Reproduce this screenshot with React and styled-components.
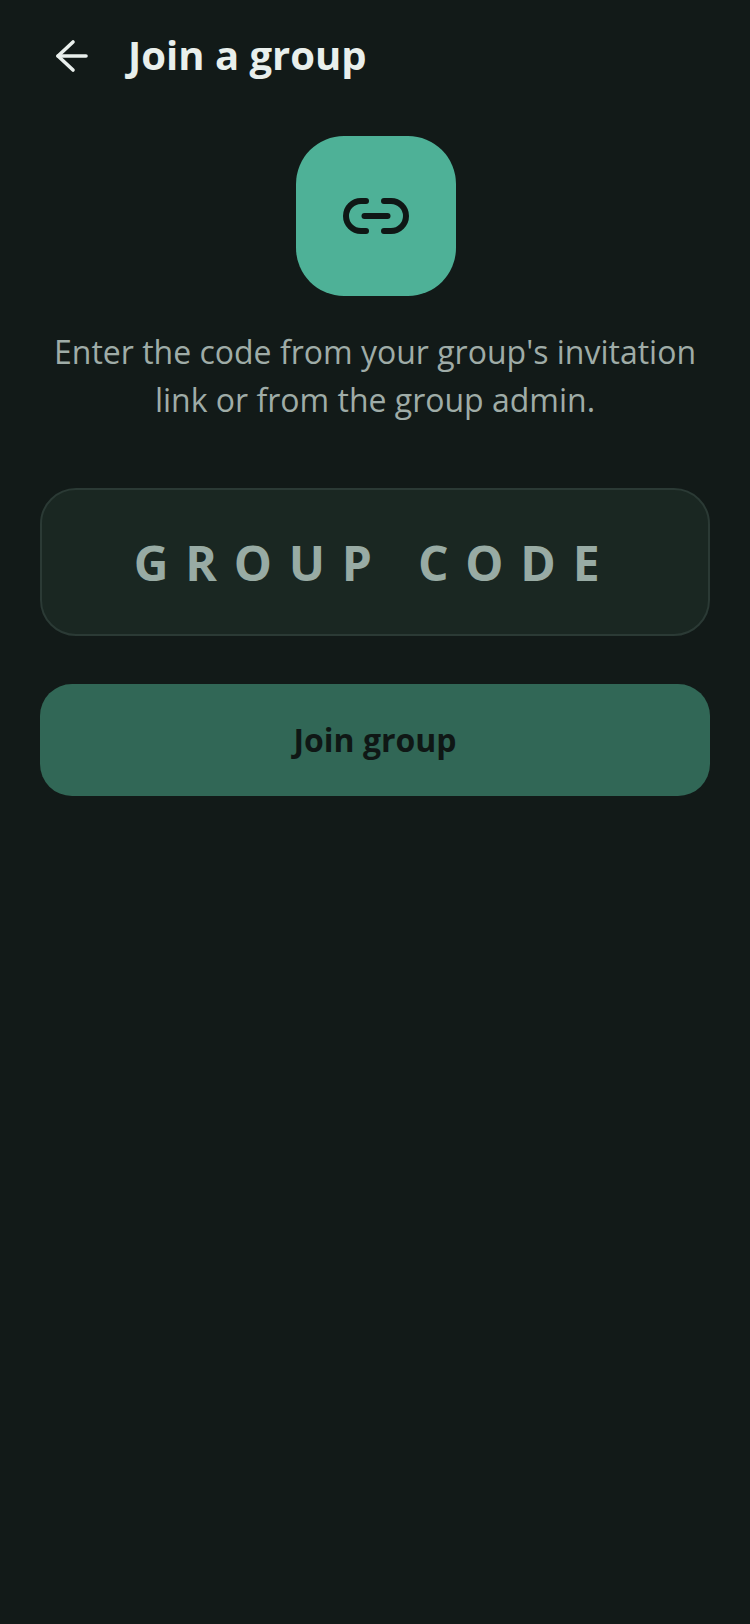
import styled, { createGlobalStyle } from "styled-components";

const GlobalStyle = createGlobalStyle`
    html, body {
        margin: 0;
        padding: 0;
        background: #121A18;
    }
    * {
        box-sizing: border-box;
    }
`;

function BackIcon() {
    return (
        <svg width="36" height="36" viewBox="0 0 36 36" fill="none" stroke="#E9EFEC" strokeWidth="3.6" strokeLinecap="round" strokeLinejoin="round">
            <path d="M4 18H32" />
            <path d="M19 4L4 18L19 32" />
        </svg>
    );
}

function LinkIcon() {
    return (
        <svg width="66" height="36" viewBox="0 0 66 36" fill="none" stroke="#0F1715" strokeWidth="6" strokeLinecap="round">
            <path d="M23 3H18C9.7 3 3 9.7 3 18C3 26.3 9.7 33 18 33H23" />
            <path d="M41 3H48C56.3 3 63 9.7 63 18C63 26.3 56.3 33 48 33H41" />
            <path d="M21.5 18H44.5" />
        </svg>
    );
}

export default function App() {
    return (
        <>
            <GlobalStyle />
            <Tela>
                <Topo>
                    <Voltar aria-label="Back">
                        <BackIcon />
                    </Voltar>
                    <Titulo>Join a group</Titulo>
                </Topo>
                <Sessao>
                    <IconeBox>
                        <LinkIcon />
                    </IconeBox>
                    <Descricao>
                        Enter the code from your group's invitation link or from the group admin.
                    </Descricao>
                    <Campo placeholder="GROUP CODE" />
                    <Botao>Join group</Botao>
                </Sessao>
            </Tela>
        </>
    );
}

const Tela = styled.div`
    width: 750px;
    height: 1624px;
    background: #121A18;
    font-family: "Open Sans", sans-serif;
    overflow: hidden;
`;

const Topo = styled.div`
    display: flex;
    align-items: center;
    height: 112px;
    padding-left: 54px;
`;

const Voltar = styled.button`
    display: flex;
    width: 36px;
    height: 36px;
    padding: 0;
    margin-right: 38px;
    background: none;
    border: none;
    cursor: pointer;
`;

const Titulo = styled.h1`
    margin: 0 0 2px;
    font-size: 40px;
    font-weight: 700;
    line-height: 54px;
    color: #E9EFEC;
`;

const Sessao = styled.div`
    display: flex;
    flex-direction: column;
    align-items: center;
    padding: 24px 40px 0;
`;

const IconeBox = styled.div`
    display: flex;
    align-items: center;
    justify-content: center;
    width: 160px;
    height: 160px;
    margin-left: 2px;
    border-radius: 48px;
    background: #4EB197;
`;

const Descricao = styled.p`
    margin: 32px 0 0;
    width: 660px;
    font-size: 32px;
    line-height: 48px;
    text-align: center;
    color: #9FACA7;
`;

const Campo = styled.input`
    width: 670px;
    height: 148px;
    margin-top: 64px;
    border: 2px solid #2B3A35;
    border-radius: 36px;
    background: #1A2722;
    font-family: "Open Sans", sans-serif;
    font-size: 48px;
    font-weight: 700;
    letter-spacing: 16.8px;
    text-align: center;
    color: #E9EFEC;
    outline: none;

    &::placeholder {
        color: #98ABA4;
        opacity: 1;
    }
`;

const Botao = styled.button`
    width: 670px;
    height: 112px;
    margin-top: 48px;
    padding-bottom: 2px;
    border: none;
    border-radius: 32px;
    background: #316756;
    font-family: "Open Sans", sans-serif;
    font-size: 32px;
    font-weight: 700;
    color: #0F1715;
    cursor: pointer;
`;
